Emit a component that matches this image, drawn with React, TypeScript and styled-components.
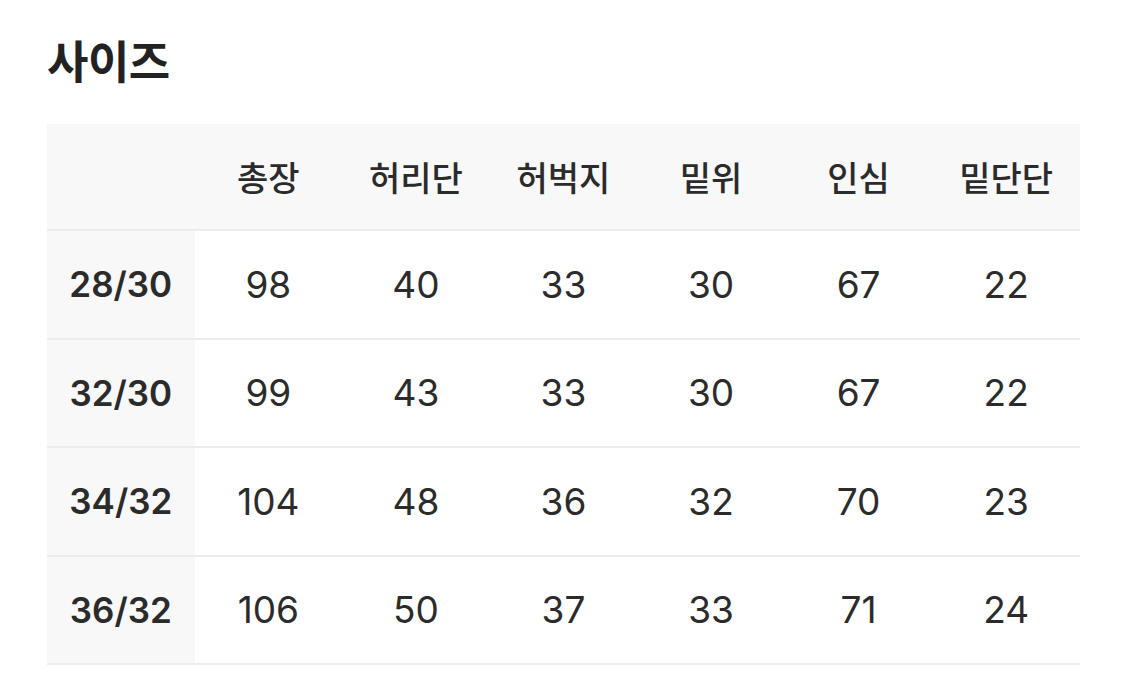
import styled, { createGlobalStyle } from "styled-components";

const GlobalStyle = createGlobalStyle`
  body {
    margin: 0;
    background: #ffffff;
    font-family: "Inter", "Noto Sans CJK KR", sans-serif;
    color: #2b2b2b;
  }
`;

const Page = styled.main`
  padding: 33px 45px 0 47px;
`;

const Title = styled.h2`
  margin: 0 0 37px;
  font-family: "Noto Sans CJK KR", sans-serif;
  font-size: 45px;
  font-weight: 700;
  line-height: 54px;
  color: #222222;
  letter-spacing: -0.5px;
`;

const Table = styled.table`
  width: 1033px;
  border-collapse: collapse;
  table-layout: fixed;
`;

const HeadCell = styled.th`
  height: 105px;
  padding: 0;
  background: #f8f8f8;
  border-bottom: 2px solid #ececec;
  font-family: "Noto Sans CJK KR", sans-serif;
  font-size: 34px;
  font-weight: 500;
  color: #2b2b2b;
  text-align: center;
`;

const RowLabel = styled.th`
  height: 106.5px;
  padding: 0;
  background: #f8f8f8;
  border-bottom: 2px solid #ececec;
  font-family: "Inter", "Noto Sans CJK KR", sans-serif;
  font-size: 35px;
  font-weight: 600;
  color: #2b2b2b;
  text-align: center;
`;

const Cell = styled.td`
  height: 106.5px;
  padding: 0;
  border-bottom: 2px solid #ececec;
  font-family: "Inter", sans-serif;
  font-size: 37px;
  font-weight: 400;
  color: #2b2b2b;
  text-align: center;
`;

const columns = ["총장", "허리단", "허벅지", "밑위", "인심", "밑단단"];

const rows: { size: string; values: number[] }[] = [
  { size: "28/30", values: [98, 40, 33, 30, 67, 22] },
  { size: "32/30", values: [99, 43, 33, 30, 67, 22] },
  { size: "34/32", values: [104, 48, 36, 32, 70, 23] },
  { size: "36/32", values: [106, 50, 37, 33, 71, 24] },
];

export default function App() {
  return (
    <>
      <GlobalStyle />
      <Page>
        <Title>사이즈</Title>
        <Table>
          <thead>
            <tr>
              <HeadCell />
              {columns.map((c) => (
                <HeadCell key={c}>{c}</HeadCell>
              ))}
            </tr>
          </thead>
          <tbody>
            {rows.map((r) => (
              <tr key={r.size}>
                <RowLabel scope="row">{r.size}</RowLabel>
                {r.values.map((v, i) => (
                  <Cell key={i}>{v}</Cell>
                ))}
              </tr>
            ))}
          </tbody>
        </Table>
      </Page>
    </>
  );
}
